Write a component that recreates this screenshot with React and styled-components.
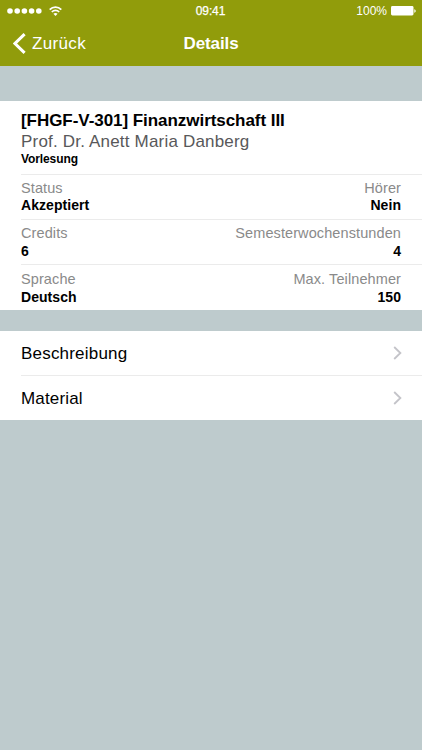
import styled, { createGlobalStyle } from "styled-components";

const GlobalStyle = createGlobalStyle`
  * {
    box-sizing: border-box;
  }
  body {
    margin: 0;
    background: #becbcd;
    font-family: "Liberation Sans", Arial, Helvetica, sans-serif;
    color: #000000;
  }
`;

const Screen = styled.div`
  width: 422px;
  height: 750px;
  overflow: hidden;
  background: #becbcd;
`;

const Header = styled.header`
  height: 66px;
  background: #919c0b;
  color: #ffffff;
`;

const StatusBar = styled.div`
  display: grid;
  grid-template-columns: 1fr auto 1fr;
  align-items: center;
  height: 22px;
  padding: 0 6px 0 7px;
`;

const Signal = styled.div`
  display: flex;
  align-items: center;
  gap: 7px;
`;

const Time = styled.span`
  margin-right: 2px;
  font-size: 12px;
  letter-spacing: -0.1px;
  -webkit-text-stroke: 0.25px #ffffff;
`;

const Battery = styled.div`
  display: flex;
  align-items: center;
  justify-content: flex-end;
  gap: 4px;
  font-size: 12px;
`;

const NavBar = styled.nav`
  display: grid;
  grid-template-columns: 1fr auto 1fr;
  align-items: center;
  height: 43px;
  padding: 0 13px;
`;

const Back = styled.a`
  display: flex;
  align-items: center;
  gap: 6px;
  font-size: 17px;
  line-height: 20px;
  letter-spacing: 0.35px;
`;

const Title = styled.h1`
  margin: 0;
  font-size: 17px;
  line-height: 20px;
  letter-spacing: -0.1px;
`;

const Card = styled.section`
  height: ${({ $height }) => $height}px;
  margin-top: ${({ $top }) => $top}px;
  padding-left: 21px;
  background: #ffffff;
`;

const Course = styled.div`
  height: 73px;
  padding-top: 9px;
`;

const Line = styled.div`
  font-size: ${({ $size }) => $size}px;
  line-height: ${({ $line }) => $line}px;
  letter-spacing: ${({ $spacing }) => $spacing || 0}px;
  font-weight: ${({ $bold }) => ($bold ? 700 : 400)};
  color: ${({ $color }) => $color || "#000000"};
  white-space: nowrap;
`;

const InfoRow = styled.div`
  display: flex;
  justify-content: space-between;
  height: ${({ $height }) => $height}px;
  padding: ${({ $pad }) => $pad}px 21px 0 0;
  border-top: 1px solid #ebebeb;
`;

const InfoCell = styled.div`
  display: flex;
  flex-direction: column;
  gap: ${({ $gap }) => $gap}px;
  text-align: ${({ $right }) => ($right ? "right" : "left")};
`;

const LinkRow = styled.div`
  display: flex;
  align-items: center;
  justify-content: space-between;
  height: ${({ $height }) => $height}px;
  padding: 1px 20px 0 0;
  border-top: ${({ $line }) => ($line ? "1px solid #ebebeb" : "none")};
`;

const Arrow = styled.svg`
  margin-bottom: 2px;
`;

const rows = [
  {
    height: 45,
    pad: 5,
    gap: 0,
    left: ["Status", "Akzeptiert"],
    right: ["Hörer", "Nein"],
  },
  {
    height: 45,
    pad: 5,
    gap: 1,
    left: ["Credits", "6"],
    right: ["Semesterwochenstunden", "4"],
  },
  {
    height: 46,
    pad: 6,
    gap: 1,
    left: ["Sprache", "Deutsch"],
    right: ["Max. Teilnehmer", "150"],
  },
];

function Info({ label, value, gap, right }) {
  return (
    <InfoCell $gap={gap} $right={right}>
      <Line $size={14.5} $line={17} $spacing={0.1} $color="#8a8a8a">
        {label}
      </Line>
      <Line $size={14} $line={17} $spacing={0.05} $bold>
        {value}
      </Line>
    </InfoCell>
  );
}

function Chevron() {
  return (
    <Arrow width="9" height="14" viewBox="0 0 9 14" fill="none">
      <path d="M1.2 1L7.4 7L1.2 13" stroke="#c4c4c9" strokeWidth="1.8" />
    </Arrow>
  );
}

function Wifi() {
  return (
    <svg width="13" height="10" viewBox="0 0 13 10" fill="none" stroke="#fff">
      <path d="M0.7 3.6C4 0.2 9 0.2 12.3 3.6" strokeWidth="1.8" />
      <path d="M2.8 6C4.9 3.8 8.1 3.8 10.2 6" strokeWidth="1.6" />
      <path d="M6.5 10L4.4 7.7C5.6 6.6 7.4 6.6 8.6 7.7Z" fill="#fff" stroke="none" />
    </svg>
  );
}

export default function App() {
  return (
    <Screen>
      <GlobalStyle />
      <Header>
        <StatusBar>
          <Signal>
            <svg width="35" height="6" viewBox="0 0 35 6" fill="#fff">
              {[3, 10.2, 17.4, 24.6, 31.8].map((x) => (
                <circle key={x} cx={x} cy="3" r="2.8" />
              ))}
            </svg>
            <Wifi />
          </Signal>
          <Time>09:41</Time>
          <Battery>
            100%
            <svg width="25" height="10" viewBox="0 0 25 10" fill="#fff">
              <rect width="22.5" height="9.5" rx="1.4" />
              <path d="M23.3 3.2C25.2 3.7 25.2 6.3 23.3 6.8Z" />
            </svg>
          </Battery>
        </StatusBar>
        <NavBar>
          <Back>
            <svg width="13" height="21" viewBox="0 0 13 21" fill="none">
              <path d="M11.6 1.2L2 10.5L11.6 19.8" stroke="#fff" strokeWidth="3" />
            </svg>
            Zurück
          </Back>
          <Title>Details</Title>
        </NavBar>
      </Header>

      <Card $top={35} $height={209}>
        <Course>
          <Line $size={17} $line={21} $spacing={-0.05} $bold>
            [FHGF-V-301] Finanzwirtschaft III
          </Line>
          <Line $size={17} $line={21} $spacing={0.19} $color="#58585a">
            Prof. Dr. Anett Maria Danberg
          </Line>
          <Line $size={12} $line={14} $spacing={-0.1} $bold>
            Vorlesung
          </Line>
        </Course>
        {rows.map(({ height, pad, gap, left, right }) => (
          <InfoRow key={left[0]} $height={height} $pad={pad}>
            <Info label={left[0]} value={left[1]} gap={gap} />
            <Info label={right[0]} value={right[1]} gap={gap} right />
          </InfoRow>
        ))}
      </Card>

      <Card $top={21} $height={89}>
        <LinkRow $height={44}>
          <Line $size={17} $line={20} $spacing={0.2}>
            Beschreibung
          </Line>
          <Chevron />
        </LinkRow>
        <LinkRow $height={45} $line>
          <Line $size={17} $line={20} $spacing={0.15}>
            Material
          </Line>
          <Chevron />
        </LinkRow>
      </Card>
    </Screen>
  );
}
